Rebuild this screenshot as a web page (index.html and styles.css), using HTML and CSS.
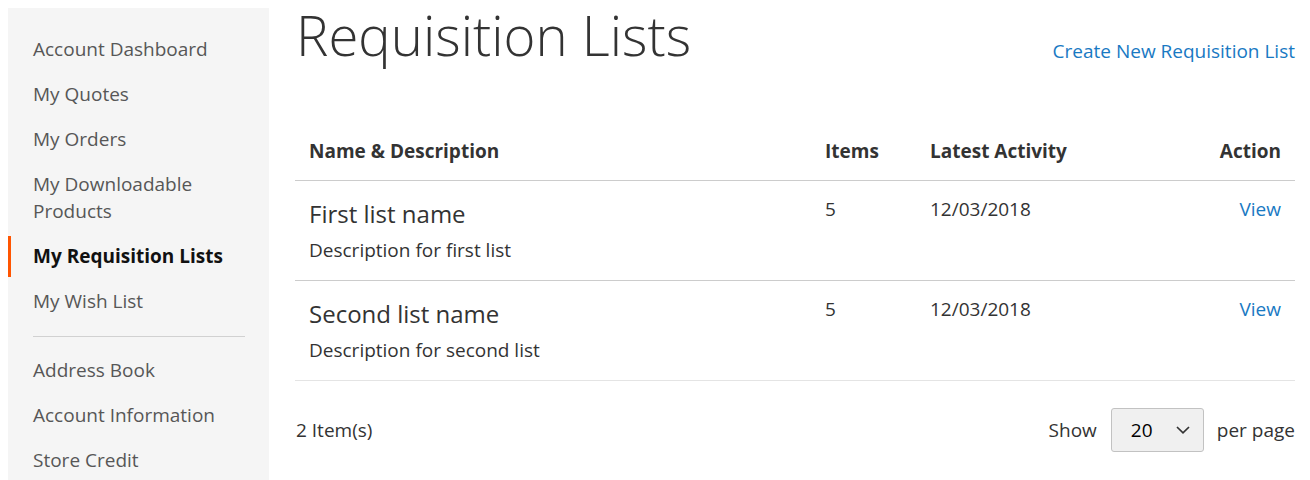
FILE: index.html
```html
<!DOCTYPE html>
<html lang="en">
<head>
<meta charset="utf-8">
<title>Requisition Lists</title>
<link rel="stylesheet" href="styles.css">
</head>
<body>
<aside class="sidebar">
  <ul class="nav">
    <li class="nav-item"><a href="#">Account Dashboard</a></li>
    <li class="nav-item"><a href="#">My Quotes</a></li>
    <li class="nav-item"><a href="#">My Orders</a></li>
    <li class="nav-item"><a href="#">My Downloadable Products</a></li>
    <li class="nav-item current"><strong>My Requisition Lists</strong></li>
    <li class="nav-item"><a href="#">My Wish List</a></li>
    <li class="nav-delimiter"></li>
    <li class="nav-item"><a href="#">Address Book</a></li>
    <li class="nav-item"><a href="#">Account Information</a></li>
    <li class="nav-item"><a href="#">Store Credit</a></li>
  </ul>
</aside>
<main class="main">
  <div class="page-head">
    <h1 class="page-title">Requisition Lists</h1>
    <a class="create-link" href="#">Create New Requisition List</a>
  </div>
  <table class="lists">
    <colgroup>
      <col class="col-name">
      <col class="col-items">
      <col class="col-date">
      <col class="col-action">
    </colgroup>
    <thead>
      <tr>
        <th>Name &amp; Description</th>
        <th>Items</th>
        <th>Latest Activity</th>
        <th class="right">Action</th>
      </tr>
    </thead>
    <tbody>
      <tr>
        <td class="name-cell">
          <div class="list-name">First list name</div>
          <div class="list-desc">Description for first list</div>
        </td>
        <td>5</td>
        <td>12/03/2018</td>
        <td class="right"><a href="#" class="view">View</a></td>
      </tr>
      <tr class="last">
        <td class="name-cell">
          <div class="list-name">Second list name</div>
          <div class="list-desc">Description for second list</div>
        </td>
        <td>5</td>
        <td>12/03/2018</td>
        <td class="right"><a href="#" class="view">View</a></td>
      </tr>
    </tbody>
  </table>
  <div class="toolbar">
    <span class="amount">2 Item(s)</span>
    <div class="limiter">
      <span>Show</span>
      <div class="select"><span>20</span>
        <svg width="14" height="8" viewBox="0 0 14 8"><path d="M1 1 L7 6.8 L13 1" fill="none" stroke="#333" stroke-width="1.7"/></svg>
      </div>
      <span>per page</span>
    </div>
  </div>
</main>
</body>
</html>
```
FILE: styles.css
```css
html, body {
  margin: 0;
  padding: 0;
  overflow: hidden;
}
body {
  padding: 8px;
  display: flex;
  align-items: flex-start;
  font-family: "Open Sans", "Liberation Sans", sans-serif;
  color: #333;
  background: #fff;
}
a { text-decoration: none; }

.sidebar {
  width: 261px;
  flex: none;
  background: #f5f5f5;
  min-height: 520px;
  padding-top: 21px;
  box-sizing: border-box;
}
.nav {
  list-style: none;
  margin: 0;
  padding: 0;
}
.nav-item {
  margin-bottom: 4px;
  font-size: 19px;
  line-height: 27px;
}
.nav-item a, .nav-item strong {
  display: block;
  padding: 7px 20px 7px 22px;
  border-left: 3px solid transparent;
  color: #575757;
}
.nav-item.current strong {
  border-left-color: #ff5501;
  color: #111;
  font-weight: 700;
}
.nav-delimiter {
  border-top: 1px solid #d1d1d1;
  margin: 14px 24px 13px 25px;
}

.main {
  width: 1000px;
  margin-left: 26px;
  flex: none;
}
.page-head {
  display: flex;
  justify-content: space-between;
  align-items: flex-start;
  height: 102px;
}
.page-title {
  margin: 0 0 0 1px;
  font-size: 54.5px;
  font-weight: 300;
  line-height: 54px;
}
.create-link {
  font-size: 19px;
  line-height: 27px;
  color: #1979c3;
  margin-top: 30px;
}

.lists {
  width: 1000px;
  border-collapse: collapse;
  table-layout: fixed;
  font-size: 19px;
  line-height: 27px;
}
.col-name { width: 515px; }
.col-items { width: 105px; }
.col-action { width: 140px; }
.lists th {
  text-align: left;
  font-weight: 700;
  padding: 28px 15px 15px;
  border-bottom: 1px solid #ccc;
}
.lists th:first-child { padding-left: 14px; }
.lists td {
  vertical-align: top;
  padding: 15px 15px 0;
  border-bottom: 1px solid #ccc;
}
.lists tr.last td { border-bottom-color: #e4e4e4; }
.lists .right { text-align: right; padding-right: 14px; }
.lists td.name-cell { padding: 18px 15px 16px 14px; }
.list-name {
  font-size: 24px;
  line-height: 30px;
}
.list-desc {
  margin-top: 8px;
}
.view { color: #1979c3; }

.toolbar {
  display: flex;
  justify-content: space-between;
  align-items: center;
  margin-top: 27px;
  font-size: 19px;
  line-height: 27px;
}
.amount { margin-left: 1px; }
.limiter {
  display: flex;
  align-items: center;
}
.select {
  display: flex;
  align-items: center;
  justify-content: space-between;
  box-sizing: border-box;
  width: 93px;
  height: 44px;
  margin: 0 13px 0 14px;
  padding: 0 13px 0 19px;
  background: #f0f0f0;
  border: 1px solid #c2c2c2;
  border-radius: 3px;
  color: #000;
}
```
